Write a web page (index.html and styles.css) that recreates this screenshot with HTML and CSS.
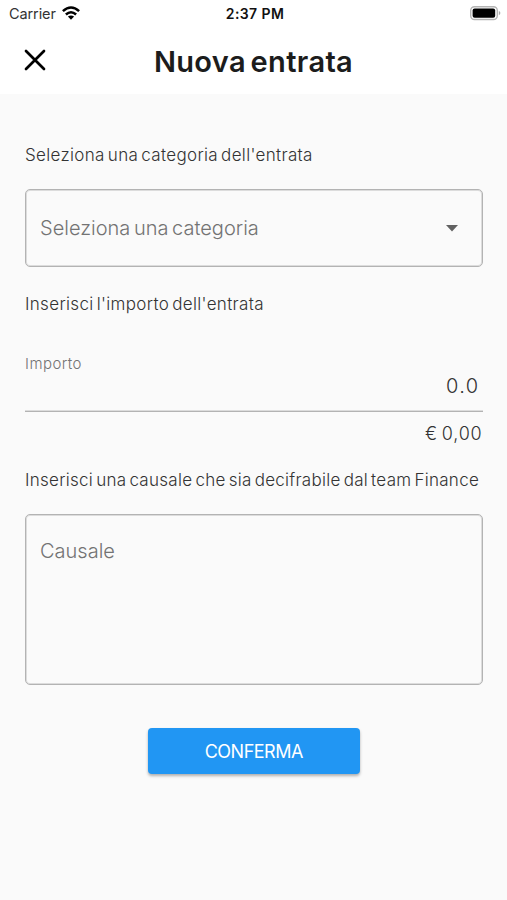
FILE: index.html
```html
<!DOCTYPE html>
<html lang="it">
<head>
<meta charset="utf-8">
<title>Nuova entrata</title>
<link rel="stylesheet" href="styles.css">
</head>
<body>
<header class="header">
  <div class="status">
    <div class="carrier"><span class="carrier-name">Carrier</span>
      <svg class="wifi" width="18" height="14" viewBox="0 0 18 14" fill="none" stroke="#000" stroke-width="2.6"><path d="M.9 5.1Q9-2.1 17.1 5.1M3.9 8.5Q9 4 14.1 8.5"/><path d="M5.9 10.6Q9 8.2 12.1 10.6L9 13.8Z" fill="#000" stroke="none"/></svg>
    </div>
    <div class="time"><span>2:37 PM</span></div>
    <svg class="battery" width="31" height="15" viewBox="0 0 31 15"><rect x=".7" y=".7" width="26.6" height="12.8" rx="3.8" fill="#fff" stroke="#b4b4b4" stroke-width="1.4"/><rect x="2.6" y="2.4" width="22.6" height="9.4" rx="2" fill="#000"/><path d="M28.8 5Q30.4 5.7 30.4 7.1T28.8 9.2Z" fill="#aaa"/></svg>
  </div>
  <div class="nav">
    <button class="close" aria-label="Chiudi"><svg width="22" height="22" viewBox="0 0 22 22" stroke="#000" stroke-width="2.7" stroke-linecap="round"><path d="M2 2L20 20M20 2L2 20"/></svg></button>
    <h1 class="title"><span>Nuova entrata</span></h1>
  </div>
</header>
<main class="form">
  <div class="label label-category"><span>Seleziona una categoria dell'entrata</span></div>
  <div class="select"><span class="select-text">Seleziona una categoria</span>
    <svg width="12" height="7" viewBox="0 0 12 7"><path d="M0 0H12L6 6.4Z" fill="#616161"/></svg>
  </div>
  <div class="label label-amount"><span>Inserisci l'importo dell'entrata</span></div>
  <div class="amount">
    <div class="amount-label"><span>Importo</span></div>
    <div class="amount-value"><span>0.0</span></div>
  </div>
  <div class="total"><span>€ 0,00</span></div>
  <div class="label label-reason"><span>Inserisci una causale che sia decifrabile dal team Finance</span></div>
  <div class="reason"><span>Causale</span></div>
  <button class="confirm"><span>CONFERMA</span></button>
</main>
</body>
</html>
```
FILE: styles.css
```css
* { box-sizing: border-box; }
body { margin: 0; height: 900px; background: #fafafa; font-family: Inter, "Liberation Sans", sans-serif; color: #333; overflow: hidden; }
button { border: 0; padding: 0; font-family: inherit; }
svg { display: block; flex: none; }
.header { height: 94px; background: #fff; }
.status { height: 28px; display: grid; grid-template-columns: 1fr auto 1fr; align-items: center; padding: 0 6px 0 9px; color: #111; }
.carrier { display: flex; align-items: center; gap: 6px; font-size: 14.5px; margin-top: -2px; }
.carrier-name { letter-spacing: -.1px; color: #333; }
.wifi { margin-top: -1px; }
.time { font-size: 14px; font-weight: 600; letter-spacing: .4px; margin-top: -2px; }
.battery { justify-self: end; margin-top: -1px; }
.nav { height: 66px; display: grid; grid-template-columns: 70px 1fr 70px; align-items: center; }
.close { justify-self: center; background: none; margin-top: -2px; }
.title { margin: 2px 0 0; text-align: center; font-size: 29px; line-height: 36px; font-weight: 600; color: #1c1c1c; letter-spacing: .35px; word-spacing: -3px; }
.form { padding: 48px 24.5px 0 25px; display: flex; flex-direction: column; }
.label { height: 26px; line-height: 26px; font-size: 17px; font-weight: 300; white-space: nowrap; letter-spacing: .33px; word-spacing: -2px; }
.select { height: 78px; margin-top: 21px; border: 1px solid #b3b3b3; box-shadow: inset 0 0 0 1px #dcdcdc; border-radius: 5px; padding: 0 24px 0 14px; display: flex; align-items: center; justify-content: space-between; font-size: 20px; font-weight: 300; color: #737373; }
.select-text { word-spacing: -2px; }
.label-amount { margin-top: 24px; }
.amount { height: 95px; border-bottom: 1px solid #b3b3b3; box-shadow: inset 0 -1px #dcdcdc; padding-top: 37px; font-weight: 300; }
.amount-label { height: 18px; line-height: 19px; font-size: 15px; color: #737373; letter-spacing: .45px; }
.amount-value { height: 28px; line-height: 28px; font-size: 20px; text-align: right; padding-right: 3px; letter-spacing: 1.4px; }
.total { height: 26px; line-height: 27px; margin-top: 8px; font-size: 18px; font-weight: 300; text-align: right; letter-spacing: .8px; word-spacing: -2px; }
.label-reason { margin-top: 21px; letter-spacing: .28px; }
.reason { height: 171px; margin-top: 21px; border: 1px solid #b3b3b3; box-shadow: inset 0 0 0 1px #dcdcdc; border-radius: 5px; padding: 22px 14px; font-size: 20px; line-height: 28px; font-weight: 300; color: #737373; }
.confirm { align-self: center; width: 212px; height: 46px; margin-top: 43px; border-radius: 4px; background: #2196f3; color: #fff; font-size: 18px; letter-spacing: -.5px; box-shadow: 0 2px 3px rgba(0,0,0,.3); }
```
